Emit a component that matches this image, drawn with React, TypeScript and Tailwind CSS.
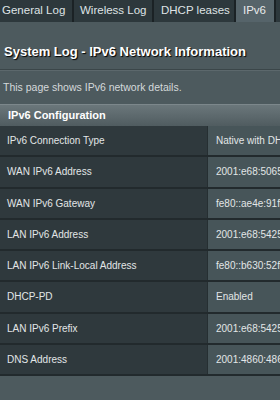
import React from "react";

const rows: [string, string][] = [
  ["IPv6 Connection Type", "Native with DHCP-PD"],
  ["WAN IPv6 Address", "2001:e68:5065:1a2b::1"],
  ["WAN IPv6 Gateway", "fe80::ae4e:91ff:fe12:3456"],
  ["LAN IPv6 Address", "2001:e68:5425:8a00::1"],
  ["LAN IPv6 Link-Local Address", "fe80::b630:52ff:fe8a:1c20"],
  ["DHCP-PD", "Enabled"],
  ["LAN IPv6 Prefix", "2001:e68:5425:8a00::/56"],
  ["DNS Address", "2001:4860:4860::8888"],
];

export default function App() {
  return (
    <div
      className="w-[280px] h-[400px] overflow-hidden bg-[#4d5a5e] text-[#e6e9ea]"
      style={{ fontFamily: '"Liberation Sans", Arial, sans-serif' }}
    >
      <div className="flex h-[22px] bg-[#1b2225] text-[11.5px] text-[#dfe3e5] whitespace-nowrap">
        <div className="w-[72px] shrink-0 mr-[2px] bg-[#2d383c] flex items-center pl-[2px]">General Log</div>
        <div className="w-[78px] shrink-0 mr-[2px] bg-[#2d383c] flex items-center pl-[6px]">Wireless Log</div>
        <div className="w-[80px] shrink-0 mr-[2px] bg-[#2d383c] flex items-center pl-[7px]">DHCP leases</div>
        <div className="w-[38px] shrink-0 mr-[2px] bg-[#56646a] flex items-center pl-[7px] text-[#e8ebec]">IPv6</div>
        <div className="flex-1 bg-[#2d383c]" />
      </div>
      <div className="pt-[22px] px-[4px]">
        <div className="text-[13px] font-bold text-white leading-[15px] [text-shadow:1px_1px_1px_#000] whitespace-nowrap">
          System Log - IPv6 Network Information
        </div>
      </div>
      <div className="mt-[10px] h-[2px] bg-[#3b4649] border-b border-[#5c686c]" />
      <div className="pt-[10px] px-[3px] text-[10.5px] leading-[13px] text-[#d4d9db]">
        This page shows IPv6 network details.
      </div>
      <div className="mt-[10px] h-[22px] flex items-center px-[8px] bg-gradient-to-b from-[#6b777b] to-[#505c60] border-t border-[#7c878b] text-[11px] font-bold text-white">
        IPv6 Configuration
      </div>
      <div>
        {rows.map(([k, v]) => (
          <div key={k} className="flex h-[31.25px] border-b-2 border-[#222a2d] text-[10px]">
            <div className="w-[208px] shrink-0 bg-[#2f393d] flex items-center pl-[7px] text-[#e2e6e7] border-r border-[#262f32]">
              {k}
            </div>
            <div className="flex-1 min-w-0 bg-[#475559] flex items-center pl-[8px] whitespace-nowrap overflow-hidden text-[#e2e6e7]">
              {v}
            </div>
          </div>
        ))}
      </div>
    </div>
  );
}
